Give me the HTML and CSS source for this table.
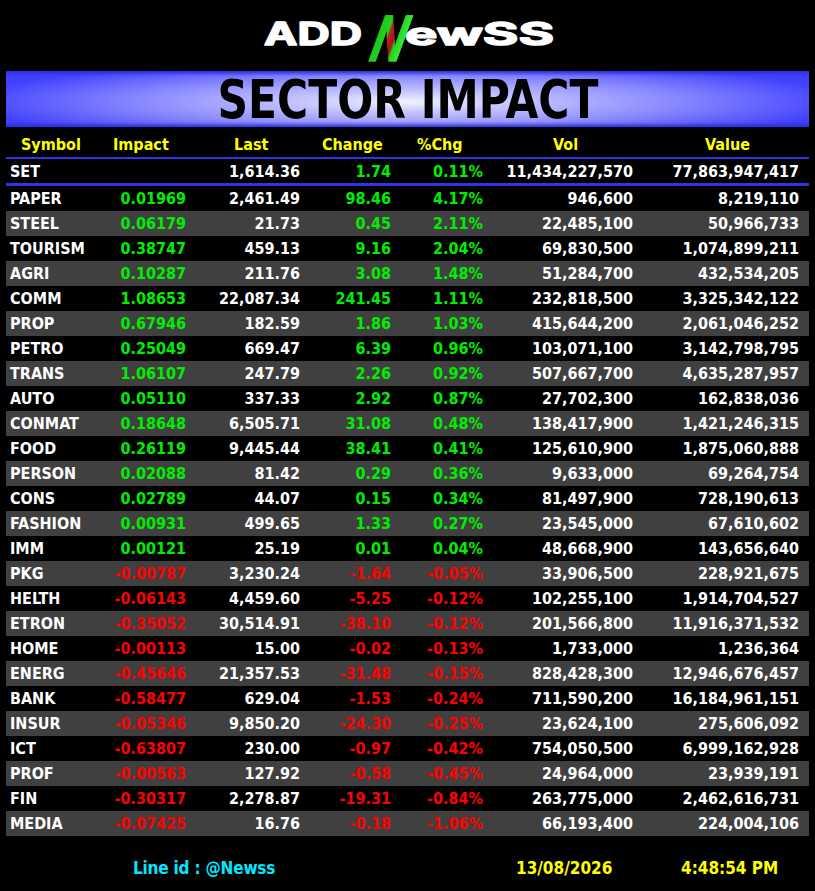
FILE: index.html
```html
<!DOCTYPE html>
<html>
<head>
<meta charset="utf-8">
<link rel="stylesheet" href="styles.css">
</head>
<body>
<div class="logo">
  <svg width="815" height="71" viewBox="0 0 815 71">
    <defs>
      <linearGradient id="ng" x1="0" y1="0" x2="1" y2="0">
        <stop offset="0" stop-color="#18c418"/>
        <stop offset="0.34" stop-color="#22d422"/>
        <stop offset="0.42" stop-color="#c01c1c"/>
        <stop offset="0.6" stop-color="#a01818"/>
        <stop offset="0.68" stop-color="#22d422"/>
        <stop offset="1" stop-color="#3cf03c"/>
      </linearGradient>
    </defs>
    <text class="lg" x="264" y="45" textLength="98" lengthAdjust="spacingAndGlyphs">ADD</text>
    <text class="ln" transform="translate(366 61) skewX(-20)" x="0" y="0" textLength="33" lengthAdjust="spacingAndGlyphs">N</text>
    <text class="lg" x="405" y="45" textLength="149" lengthAdjust="spacingAndGlyphs">ewSS</text>
  </svg>
</div>
<div class="banner"><span class="title">SECTOR IMPACT</span></div>
<div class="table">
  <div class="row head">
    <div class="h1">Symbol</div><div class="h2">Impact</div><div class="h3">Last</div><div class="h4">Change</div><div class="h5">%Chg</div><div class="h6">Vol</div><div class="h7">Value</div>
  </div>
  <div class="row set">
    <div class="sym">SET</div><div class="num g"></div><div class="num">1,614.36</div><div class="num g">1.74</div><div class="num g">0.11%</div><div class="num">11,434,227,570</div><div class="num">77,863,947,417</div>
  </div>
  <div class="rows">
    <div class="row"><div class="sym">PAPER</div><div class="num g">0.01969</div><div class="num">2,461.49</div><div class="num g">98.46</div><div class="num g">4.17%</div><div class="num">946,600</div><div class="num">8,219,110</div></div>
    <div class="row"><div class="sym">STEEL</div><div class="num g">0.06179</div><div class="num">21.73</div><div class="num g">0.45</div><div class="num g">2.11%</div><div class="num">22,485,100</div><div class="num">50,966,733</div></div>
    <div class="row"><div class="sym">TOURISM</div><div class="num g">0.38747</div><div class="num">459.13</div><div class="num g">9.16</div><div class="num g">2.04%</div><div class="num">69,830,500</div><div class="num">1,074,899,211</div></div>
    <div class="row"><div class="sym">AGRI</div><div class="num g">0.10287</div><div class="num">211.76</div><div class="num g">3.08</div><div class="num g">1.48%</div><div class="num">51,284,700</div><div class="num">432,534,205</div></div>
    <div class="row"><div class="sym">COMM</div><div class="num g">1.08653</div><div class="num">22,087.34</div><div class="num g">241.45</div><div class="num g">1.11%</div><div class="num">232,818,500</div><div class="num">3,325,342,122</div></div>
    <div class="row"><div class="sym">PROP</div><div class="num g">0.67946</div><div class="num">182.59</div><div class="num g">1.86</div><div class="num g">1.03%</div><div class="num">415,644,200</div><div class="num">2,061,046,252</div></div>
    <div class="row"><div class="sym">PETRO</div><div class="num g">0.25049</div><div class="num">669.47</div><div class="num g">6.39</div><div class="num g">0.96%</div><div class="num">103,071,100</div><div class="num">3,142,798,795</div></div>
    <div class="row"><div class="sym">TRANS</div><div class="num g">1.06107</div><div class="num">247.79</div><div class="num g">2.26</div><div class="num g">0.92%</div><div class="num">507,667,700</div><div class="num">4,635,287,957</div></div>
    <div class="row"><div class="sym">AUTO</div><div class="num g">0.05110</div><div class="num">337.33</div><div class="num g">2.92</div><div class="num g">0.87%</div><div class="num">27,702,300</div><div class="num">162,838,036</div></div>
    <div class="row"><div class="sym">CONMAT</div><div class="num g">0.18648</div><div class="num">6,505.71</div><div class="num g">31.08</div><div class="num g">0.48%</div><div class="num">138,417,900</div><div class="num">1,421,246,315</div></div>
    <div class="row"><div class="sym">FOOD</div><div class="num g">0.26119</div><div class="num">9,445.44</div><div class="num g">38.41</div><div class="num g">0.41%</div><div class="num">125,610,900</div><div class="num">1,875,060,888</div></div>
    <div class="row"><div class="sym">PERSON</div><div class="num g">0.02088</div><div class="num">81.42</div><div class="num g">0.29</div><div class="num g">0.36%</div><div class="num">9,633,000</div><div class="num">69,264,754</div></div>
    <div class="row"><div class="sym">CONS</div><div class="num g">0.02789</div><div class="num">44.07</div><div class="num g">0.15</div><div class="num g">0.34%</div><div class="num">81,497,900</div><div class="num">728,190,613</div></div>
    <div class="row"><div class="sym">FASHION</div><div class="num g">0.00931</div><div class="num">499.65</div><div class="num g">1.33</div><div class="num g">0.27%</div><div class="num">23,545,000</div><div class="num">67,610,602</div></div>
    <div class="row"><div class="sym">IMM</div><div class="num g">0.00121</div><div class="num">25.19</div><div class="num g">0.01</div><div class="num g">0.04%</div><div class="num">48,668,900</div><div class="num">143,656,640</div></div>
    <div class="row"><div class="sym">PKG</div><div class="num r">-0.00787</div><div class="num">3,230.24</div><div class="num r">-1.64</div><div class="num r">-0.05%</div><div class="num">33,906,500</div><div class="num">228,921,675</div></div>
    <div class="row"><div class="sym">HELTH</div><div class="num r">-0.06143</div><div class="num">4,459.60</div><div class="num r">-5.25</div><div class="num r">-0.12%</div><div class="num">102,255,100</div><div class="num">1,914,704,527</div></div>
    <div class="row"><div class="sym">ETRON</div><div class="num r">-0.35052</div><div class="num">30,514.91</div><div class="num r">-38.10</div><div class="num r">-0.12%</div><div class="num">201,566,800</div><div class="num">11,916,371,532</div></div>
    <div class="row"><div class="sym">HOME</div><div class="num r">-0.00113</div><div class="num">15.00</div><div class="num r">-0.02</div><div class="num r">-0.13%</div><div class="num">1,733,000</div><div class="num">1,236,364</div></div>
    <div class="row"><div class="sym">ENERG</div><div class="num r">-0.45646</div><div class="num">21,357.53</div><div class="num r">-31.48</div><div class="num r">-0.15%</div><div class="num">828,428,300</div><div class="num">12,946,676,457</div></div>
    <div class="row"><div class="sym">BANK</div><div class="num r">-0.58477</div><div class="num">629.04</div><div class="num r">-1.53</div><div class="num r">-0.24%</div><div class="num">711,590,200</div><div class="num">16,184,961,151</div></div>
    <div class="row"><div class="sym">INSUR</div><div class="num r">-0.05346</div><div class="num">9,850.20</div><div class="num r">-24.30</div><div class="num r">-0.25%</div><div class="num">23,624,100</div><div class="num">275,606,092</div></div>
    <div class="row"><div class="sym">ICT</div><div class="num r">-0.63807</div><div class="num">230.00</div><div class="num r">-0.97</div><div class="num r">-0.42%</div><div class="num">754,050,500</div><div class="num">6,999,162,928</div></div>
    <div class="row"><div class="sym">PROF</div><div class="num r">-0.00563</div><div class="num">127.92</div><div class="num r">-0.58</div><div class="num r">-0.45%</div><div class="num">24,964,000</div><div class="num">23,939,191</div></div>
    <div class="row"><div class="sym">FIN</div><div class="num r">-0.30317</div><div class="num">2,278.87</div><div class="num r">-19.31</div><div class="num r">-0.84%</div><div class="num">263,775,000</div><div class="num">2,462,616,731</div></div>
    <div class="row"><div class="sym">MEDIA</div><div class="num r">-0.07425</div><div class="num">16.76</div><div class="num r">-0.18</div><div class="num r">-1.06%</div><div class="num">66,193,400</div><div class="num">224,004,106</div></div>
  </div>
</div>
<div class="footer">
  <span class="line">Line id : @Newss</span>
  <span class="date">13/08/2026</span>
  <span class="time">4:48:54 PM</span>
</div>
</body>
</html>
```
FILE: styles.css
```css
html, body {
  margin: 0;
  padding: 0;
  background: #000;
}
body {
  width: 815px;
  height: 891px;
  overflow: hidden;
  font-family: "DejaVu Sans Condensed", "DejaVu Sans", sans-serif;
  font-stretch: condensed;
  font-weight: bold;
  color: #fff;
}
.logo {
  height: 71px;
}
.logo svg {
  display: block;
  overflow: visible;
}
.lg {
  font-family: Inter, "DejaVu Sans", sans-serif;
  font-stretch: normal;
  font-weight: 700;
  font-size: 31px;
  fill: #fff;
  stroke: #fff;
  stroke-width: 1.4px;
  stroke-linejoin: round;
}
.ln {
  font-family: Inter, "DejaVu Sans", sans-serif;
  font-stretch: normal;
  font-weight: 700;
  font-size: 62px;
  fill: url(#ng);
  stroke: url(#ng);
  stroke-width: 1.5px;
  stroke-linejoin: round;
}
.banner {
  margin: 0 6px;
  height: 56px;
  display: flex;
  align-items: center;
  justify-content: center;
  background:
    linear-gradient(to bottom, rgba(40,40,230,0.9) 0, rgba(40,40,230,0) 5px, rgba(40,40,230,0) 51px, rgba(40,40,230,0.9) 56px),
    radial-gradient(ellipse 55% 75% at 50% 55%, #f2f2ff 0%, #c4c4ff 25%, #8a8aff 60%, #4040ff 100%);
}
.title {
  display: inline-block;
  font-size: 53px;
  line-height: 56px;
  color: #000;
  transform: scaleX(0.89);
  margin-top: 2px;
}
.table {
  margin: 5px 6px 0;
  width: 803px;
  font-size: 16px;
}
.row {
  display: grid;
  grid-template-columns: 104px 76px 114px 91px 92px 150px 166px;
  padding-right: 10px;
  height: 25px;
  align-items: center;
  white-space: nowrap;
}
.head {
  color: #ffff00;
  border-bottom: 2px solid #3232e6;
}
.head div { text-align: left; }
.h1 { padding-left: 15px; }
.h2 { padding-left: 3px; }
.h3 { padding-left: 48px; }
.h4 { padding-left: 22px; }
.h5 { padding-left: 26px; }
.h6 { padding-left: 70px; }
.h7 { padding-left: 72px; }
.set {
  height: 24px;
  border-bottom: 3px solid #3232e6;
}
.rows .row:nth-child(even) {
  background: #404040;
}
.sym {
  padding-left: 4px;
}
.num {
  text-align: right;
}
.g { color: #00ee00; }
.r { color: #ff0000; }
.footer {
  margin-top: 21px;
  height: 22px;
  line-height: 22px;
  display: flex;
  padding-left: 133px;
  font-size: 17px;
  white-space: pre;
}
.line {
  width: 383px;
  color: #00e8ff;
  letter-spacing: -0.2px;
}
.date {
  width: 165px;
  color: #ffff00;
}
.time {
  color: #ffff00;
}
```
